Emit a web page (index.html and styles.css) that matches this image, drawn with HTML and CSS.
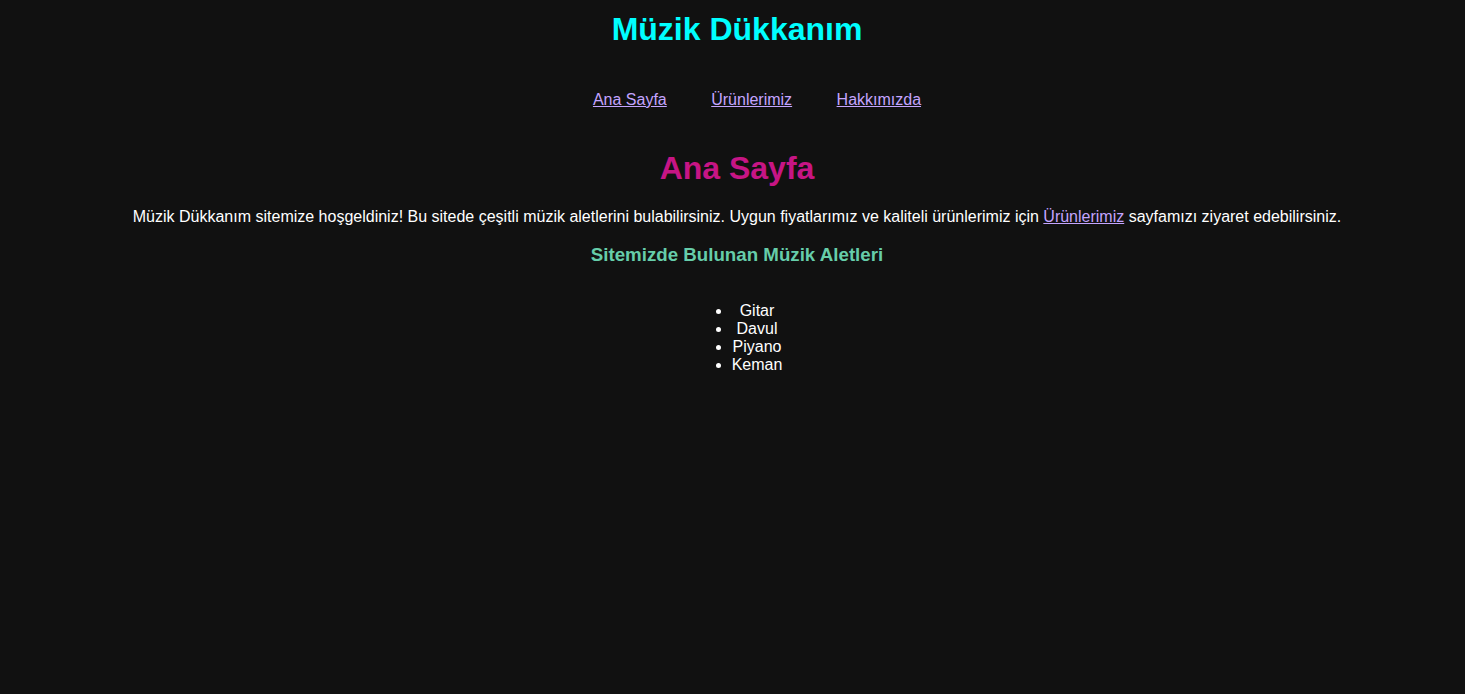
FILE: index.html
```html
<!DOCTYPE html>
<html lang="tr">
<head>
<meta charset="utf-8">
<title>Müzik Dükkanım</title>
<link rel="stylesheet" href="styles.css">
</head>
<body>
<header class="site-header">
  <h1 class="site-title">Müzik Dükkanım</h1>
  <nav class="site-nav">
    <ul class="nav-list">
      <li class="nav-item"><a class="nav-link" href="#">Ana Sayfa</a></li>
      <li class="nav-item"><a class="nav-link" href="#">Ürünlerimiz</a></li>
      <li class="nav-item"><a class="nav-link" href="#">Hakkımızda</a></li>
    </ul>
  </nav>
</header>
<main class="content">
  <h2 class="page-title">Ana Sayfa</h2>
  <p class="intro">Müzik Dükkanım sitemize hoşgeldiniz! Bu sitede çeşitli müzik aletlerini bulabilirsiniz. Uygun fiyatlarımız ve kaliteli ürünlerimiz için <a class="nav-link" href="#">Ürünlerimiz</a> sayfamızı ziyaret edebilirsiniz.</p>
  <h3 class="section-title">Sitemizde Bulunan Müzik Aletleri</h3>
  <ul class="instrument-list">
    <li>Gitar</li>
    <li>Davul</li>
    <li>Piyano</li>
    <li>Keman</li>
  </ul>
</main>
</body>
</html>
```
FILE: styles.css
```css
html, body {
  background: #111111;
}
body {
  margin: 0;
  padding: 0 8px 0 17px;
  color: #ffffff;
  font-family: "Liberation Sans", Arial, sans-serif;
  font-size: 16px;
  text-align: center;
}
.site-title {
  margin: 11px 0 0;
  font-size: 32px;
  font-weight: bold;
  color: #00ffff;
}
.nav-list {
  margin: 42.5px 0 0;
  padding-left: 40px;
  list-style: none;
}
.nav-item {
  display: inline;
  margin: 0 20px;
}
.nav-link {
  color: #c4a4ff;
  text-decoration: underline;
}
.page-title {
  margin: 41.8px 0 0;
  font-size: 32px;
  font-weight: bold;
  color: #c71585;
}
.intro {
  margin: 20.5px 0 0;
}
.section-title {
  margin: 18.6px 0 18.72px;
  font-size: 18.72px;
  font-weight: bold;
  color: #66cdaa;
}
.instrument-list {
  display: inline-block;
  margin: 17px 0 0;
  padding-left: 40px;
}
```
